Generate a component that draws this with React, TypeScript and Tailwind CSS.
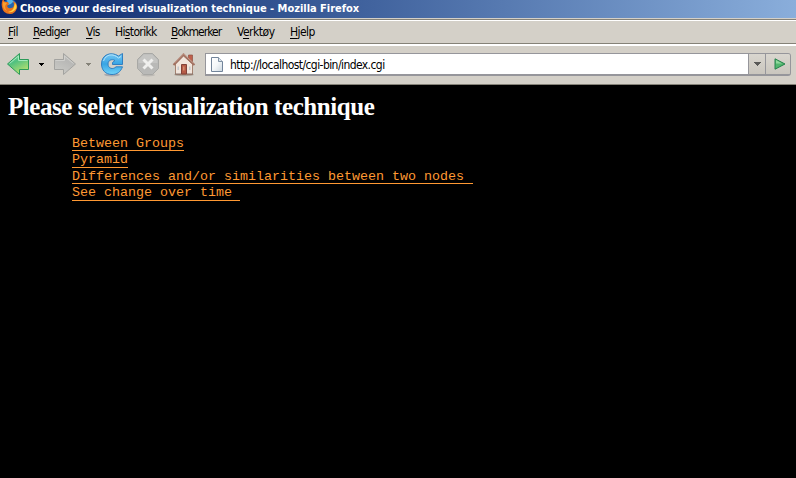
const ui = "font-['DejaVu_Sans_Condensed','DejaVu_Sans',sans-serif]";

const menus = [
  { pre: '', key: 'F', post: 'il', cls: 'w-[25px] tracking-[-0.4px]' },
  { pre: '', key: 'R', post: 'ediger', cls: 'w-[53px] tracking-[-0.7px]' },
  { pre: '', key: 'V', post: 'is', cls: 'w-[29px] tracking-[-0.7px]' },
  { pre: 'Hi', key: 's', post: 'torikk', cls: 'w-[56px] tracking-[-0.65px]' },
  { pre: '', key: 'B', post: 'okmerker', cls: 'w-[66px] tracking-[-0.95px]' },
  { pre: 'V', key: 'e', post: 'rktøy', cls: 'w-[53px] tracking-[-0.5px]' },
  { pre: '', key: 'H', post: 'jelp', cls: 'w-[40px] tracking-[-0.6px]' },
];

const links = [
  { text: 'Between Groups', cls: 'h-[16px] w-[112px]' },
  { text: 'Pyramid', cls: 'h-[17px] w-[56px]' },
  { text: 'Differences and/or similarities between two nodes ', cls: 'h-[16px] w-[401px]' },
  { text: 'See change over time ', cls: 'h-[17px] w-[168px]' },
];

function FirefoxIcon() {
  return (
    <svg width="17" height="17" viewBox="0 0 17 17" className="ml-[1px] -mt-[2px] shrink-0">
      <circle cx="9" cy="8" r="7" fill="#2464b0" />
      <path d="M6 2 Q10 0 13 4 Q11 4 10 6 L7 7Z" fill="#58b4e6" />
      <path d="M2 1 L4 4 L7 4 L8 6 L6 8 Q7 11 10 10 Q13 10 13 6 L12 3 Q17 6 16 10 Q14 16 9 16 Q2 16 1 9 Q0 5 2 1Z" fill="#e8721c" />
      <path d="M14 5 Q17 9 14 12 Q11 15 7 14 Q12 13 13 9Z" fill="#ffd040" />
      <path d="M2 4 L6 5 L4 8 Q4 11 6 13 Q1 11 2 4Z" fill="#f8a030" />
    </svg>
  );
}

function Arrow({ forward = false }: { forward?: boolean }) {
  const id = forward ? 'forward' : 'back';
  return (
    <svg width="24" height="24" viewBox="0 0 24 24" className="shrink-0">
      <defs>
        <linearGradient id={id} x1="0" y1="0" x2="0.5" y2="1">
          <stop offset="0" stopColor={forward ? '#cacaca' : '#a8e8c0'} />
          <stop offset="0.45" stopColor={forward ? '#b8b8b6' : '#50c080'} />
          <stop offset="1" stopColor={forward ? '#c8c8c4' : '#b4e070'} />
        </linearGradient>
      </defs>
      <g transform={forward ? 'translate(24 0) scale(-1 1)' : undefined}>
        <path d="M1.5 12 L13.5 1.5 V7.5 H22.5 V17.5 H13.5 V22.5Z" fill={`url(#${id})`} stroke={forward ? '#a3a3a0' : '#2c9a58'} />
        <path d="M3.5 11.5 L12.5 4 V8.5 H21.5" fill="none" stroke={forward ? '#d0d0cd' : '#a4eabd'} />
      </g>
    </svg>
  );
}

function Caret({ color }: { color: string }) {
  return (
    <svg width="5" height="3" viewBox="0 0 5 3" shapeRendering="crispEdges">
      <path d="M0 0H5V1H4V2H3V3H2V2H1V1H0Z" fill={color} />
    </svg>
  );
}

function Reload() {
  return (
    <svg width="24" height="25" viewBox="0 0 24 25">
      <defs>
        <linearGradient id="reload" x1="0" y1="0" x2="0" y2="1">
          <stop offset="0" stopColor="#78c8f4" />
          <stop offset="0.5" stopColor="#38a5e4" />
          <stop offset="1" stopColor="#72d3f8" />
        </linearGradient>
      </defs>
      <ellipse cx="12" cy="22.8" rx="8" ry="1.6" fill="#aaa9ad" />
      <path d="M18.5 4 L22.5 1.5 V12.5 H12.5 V10.5 L15 8.5 C11.5 6.5 8 8.5 8 12 C8 16.5 13 18 16 14.8 H22.5 C20.5 20 17 22.5 12 22.5 C5.5 22.5 1.5 18 1.5 12 C1.5 2.5 11 -1 18.5 4Z" fill="url(#reload)" stroke="#327fc0" />
      <path d="M3.5 9 C6 2 13 1 18.5 6 L21 4.5" fill="none" stroke="#b4e4fa" />
    </svg>
  );
}

function Stop() {
  return (
    <svg width="24" height="25" viewBox="0 0 24 25">
      <ellipse cx="12" cy="23" rx="7" ry="1.5" fill="#bcb9b4" />
      <path d="M7.5 1.5H16.5L22.5 7.5V16.5L16.5 22.5H7.5L1.5 16.5V7.5Z" fill="#b9b9b7" stroke="#a8a8a5" />
      <path d="M8 2.5H16L21.5 8V11H2.5V8Z" fill="#c5c5c3" />
      <path d="M7.5 7.5L16.5 16.5M16.5 7.5L7.5 16.5" stroke="#efefed" strokeWidth="3" />
    </svg>
  );
}

function Home() {
  return (
    <svg width="24" height="25" viewBox="0 0 24 25">
      <ellipse cx="12" cy="22.8" rx="10" ry="1.5" fill="#aaa49a" />
      <path d="M16.5 3H20.5V10H16.5Z" fill="#c0604c" stroke="#8c5142" strokeWidth=".7" />
      <path d="M3.5 12L11.5 4L20.5 12V22.5H3.5Z" fill="#f1e5dc" stroke="#a48270" />
      <path d="M1.5 13L11.5 2.5L22.5 13" fill="none" stroke="#a27060" strokeWidth="2" />
      <path d="M2.5 11L11.5 1.8L21.5 11" fill="none" stroke="#cda99a" strokeWidth=".8" />
      <path d="M9.5 12.5H14.5V22H9.5Z" fill="#b65b47" stroke="#824238" />
      <path d="M11 14.5H12.5V18.5H11Z" fill="#d68d70" />
      <path d="M5.5 14.5H7V18H5.5ZM17 14.5H18.5V18H17Z" fill="#c4c8cc" />
      <path d="M3 22H9M15 22H21" stroke="#83706a" />
    </svg>
  );
}

function PageIcon() {
  return (
    <svg width="12" height="15" viewBox="0 0 12 15" className="ml-[5px] mt-[3px] shrink-0">
      <defs>
        <linearGradient id="page" x1="0" y1="0" x2="1" y2="1">
          <stop stopColor="#fff" />
          <stop offset=".5" stopColor="#f4f7f9" />
          <stop offset="1" stopColor="#cbd6df" />
        </linearGradient>
      </defs>
      <path d="M.5 .5H7.5L11.5 4.5V14.5H.5Z" fill="url(#page)" stroke="#72849a" />
      <path d="M7.5 .5V4.5H11.5" fill="#dce4eb" stroke="#8192a5" />
    </svg>
  );
}

export default function App() {
  return (
    <div className="h-[478px] w-[796px] overflow-hidden bg-black">
      <header className={`flex h-[18px] items-start overflow-hidden bg-gradient-to-r from-[#0a246a] to-[#8aaedb] ${ui}`}>
        <FirefoxIcon />
        <h1 className="ml-[2px] whitespace-pre text-[11px] leading-[18px] font-bold tracking-[-0.02px] text-white">Choose your desired visualization technique - Mozilla Firefox</h1>
      </header>
      <nav className={`flex h-[26px] border-t border-b border-t-[#d4d0c8] border-b-[#858278] bg-[#d4d0c8] text-[12px] text-black ${ui}`}>
        <div className="flex w-full border-t border-[#858278]">
          <div className="flex w-full border-t border-white pl-[8px] leading-[23px]">
            {menus.map((m) => (
              <span key={m.key + m.post} className={`shrink-0 whitespace-nowrap ${m.cls}`}>
                {m.pre}<span className="underline decoration-1 underline-offset-[2px]">{m.key}</span>{m.post}
              </span>
            ))}
          </div>
        </div>
      </nav>
      <div className="flex h-[41px] border-t-2 border-b border-t-white border-b-[#858278] bg-[#d4d0c8] pt-[6px] pl-[6px]">
        <Arrow />
        <span className="mt-[11px] ml-[9px] flex w-[14px]"><Caret color="#000" /></span>
        <Arrow forward />
        <span className="mt-[11px] ml-[9px] flex w-[14px]"><Caret color="#858278" /></span>
        <Reload />
        <span className="w-[12px]" />
        <Stop />
        <span className="w-[12px]" />
        <Home />
        <div className="mt-[1px] ml-[9px] flex h-[23px] w-[586px] overflow-hidden rounded-r-[3px] border border-b-2 border-[#96969b] bg-[#d4d0c8]">
          <div className="flex w-[542px] bg-white">
            <PageIcon />
            <span className={`ml-[7px] whitespace-nowrap text-[12px] leading-[23px] tracking-[-0.57px] text-black ${ui}`}>http://localhost/cgi-bin/index.cgi</span>
          </div>
          <div className="flex w-[18px] items-center justify-center border-x border-[#96969b] bg-gradient-to-b from-[#d9d6cf] to-[#cac6be]">
            <svg width="7" height="4" viewBox="0 0 7 4" shapeRendering="crispEdges"><path d="M0 0H7V1H6V2H5V3H4V4H3V3H2V2H1V1H0Z" fill="#5a5a58" /></svg>
          </div>
          <div className="flex flex-1 items-center justify-center bg-gradient-to-b from-[#d9d6cf] to-[#cac6be] pl-[3px]">
            <svg width="12" height="12" viewBox="0 0 12 12"><path d="M1 .8L11 6L1 11.2Z" fill="#52b76f" stroke="#26824c" /><path d="M2 2L8 5.5H2Z" fill="#91d99e" /></svg>
          </div>
        </div>
      </div>
      <main>
        <h2 className="mt-[7px] ml-[8px] h-[50px] whitespace-nowrap font-['Liberation_Serif',serif] text-[25px] leading-[30px] font-bold tracking-[-0.44px] text-white">Please select visualization technique</h2>
        <ul className="ml-[72px] -mt-[7px] font-['Liberation_Mono',monospace] text-[13.333px] text-[#ff9933]">
          {links.map((l) => (
            <li key={l.text} className={`whitespace-pre border-b border-[#ff9933] leading-[17px] ${l.cls}`}>{l.text}</li>
          ))}
        </ul>
      </main>
    </div>
  );
}
